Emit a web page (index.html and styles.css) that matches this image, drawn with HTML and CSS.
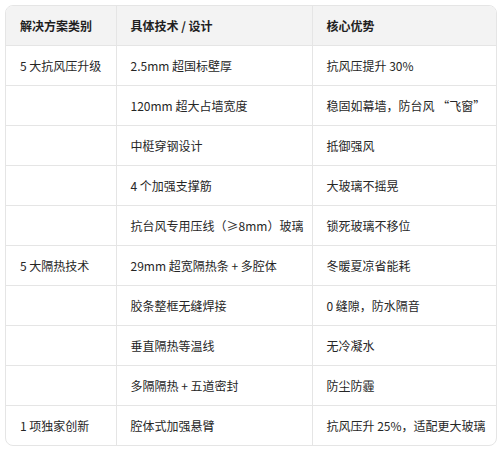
FILE: index.html
```html
<!DOCTYPE html>
<html lang="zh">
<head>
<meta charset="utf-8">
<link rel="stylesheet" href="styles.css">
</head>
<body>
<div class="wrap">
<table class="tbl">
<colgroup><col class="c1"><col class="c2"><col class="c3"></colgroup>
<thead>
<tr><th>解决方案类别</th><th>具体技术 / 设计</th><th>核心优势</th></tr>
</thead>
<tbody>
<tr><td>5 大抗风压升级</td><td>2.5mm 超国标壁厚</td><td>抗风压提升 30%</td></tr>
<tr><td></td><td>120mm 超大占墙宽度</td><td>稳固如幕墙，防台风 “飞窗”</td></tr>
<tr><td></td><td>中梃穿钢设计</td><td>抵御强风</td></tr>
<tr><td></td><td>4 个加强支撑筋</td><td>大玻璃不摇晃</td></tr>
<tr><td></td><td>抗台风专用压线（≥8mm）玻璃</td><td>锁死玻璃不移位</td></tr>
<tr><td>5 大隔热技术</td><td>29mm 超宽隔热条 + 多腔体</td><td>冬暖夏凉省能耗</td></tr>
<tr><td></td><td>胶条整框无缝焊接</td><td>0 缝隙，防水隔音</td></tr>
<tr><td></td><td>垂直隔热等温线</td><td>无冷凝水</td></tr>
<tr><td></td><td>多隔隔热 + 五道密封</td><td>防尘防霾</td></tr>
<tr><td>1 项独家创新</td><td>腔体式加强悬臂</td><td>抗风压升 25%，适配更大玻璃</td></tr>
</tbody>
</table>
</div>
</body>
</html>
```
FILE: styles.css
```css
html, body {
  margin: 0;
  padding: 0;
  background: #ffffff;
}
body {
  font-family: "Noto Sans CJK SC", "Noto Sans", sans-serif;
  font-size: 12px;
  color: #262626;
}
.wrap {
  margin: 5px 0 0 5px;
  width: 490px;
  border: 1px solid #e5e5e5;
  border-radius: 8px;
  overflow: hidden;
}
.tbl {
  width: 100%;
  border-collapse: collapse;
  table-layout: fixed;
}
.c1 { width: 110px; }
.c2 { width: 196px; }
.c3 { width: auto; }
.tbl th,
.tbl td {
  height: 39px;
  padding: 0 0 0 14px;
  text-align: left;
  vertical-align: middle;
  line-height: 18px;
  border-left: 1px solid #e5e5e5;
  border-top: 1px solid #e5e5e5;
  white-space: nowrap;
}
.tbl th:first-child,
.tbl td:first-child {
  border-left: none;
}
.tbl thead th {
  border-top: none;
  background: #f3f3f3;
  font-weight: 700;
  color: #1f1f1f;
}
```
